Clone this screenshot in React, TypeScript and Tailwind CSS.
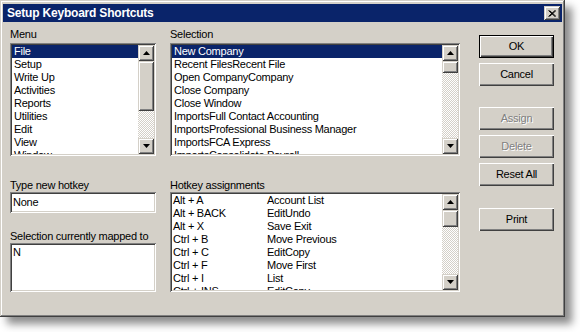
import React from "react";

const SUNKEN =
  "shadow-[inset_1px_1px_0_#808080,inset_-1px_-1px_0_#ffffff,inset_2px_2px_0_#404040,inset_-2px_-2px_0_#d4d0c8]";
const RAISED =
  "shadow-[inset_1px_1px_0_#ffffff,inset_-1px_-1px_0_#404040,inset_-2px_-2px_0_#808080]";
const SB_BTN =
  "shadow-[inset_1px_1px_0_#d4d0c8,inset_-1px_-1px_0_#404040,inset_2px_2px_0_#ffffff,inset_-2px_-2px_0_#808080]";

const menuItems = ["File", "Setup", "Write Up", "Activities", "Reports", "Utilities", "Edit", "View", "Window"];

const selectionItems = [
  "New Company",
  "Recent FilesRecent File",
  "Open CompanyCompany",
  "Close Company",
  "Close Window",
  "ImportsFull Contact Accounting",
  "ImportsProfessional Business Manager",
  "ImportsFCA Express",
  "ImportsConsolidate Payroll",
];

const hotkeys: [string, string][] = [
  ["Alt + A", "Account List"],
  ["Alt + BACK", "EditUndo"],
  ["Alt + X", "Save Exit"],
  ["Ctrl + B", "Move Previous"],
  ["Ctrl + C", "EditCopy"],
  ["Ctrl + F", "Move First"],
  ["Ctrl + I", "List"],
  ["Ctrl + INS", "EditCopy"],
];

function Arrow({ down }: { down?: boolean }) {
  return (
    <svg width="7" height="4" viewBox="0 0 7 4">
      <polygon points={down ? "0,0 7,0 3.5,4" : "3.5,0 7,4 0,4"} fill="#000" />
    </svg>
  );
}

function ScrollBar({ thumb }: { thumb: number }) {
  return (
    <div className="w-[16px] h-full flex flex-col shrink-0">
      <div className={`h-[16px] shrink-0 bg-[#d4d0c8] flex items-center justify-center ${SB_BTN}`}>
        <Arrow />
      </div>
      <div className="flex-1 bg-[image:repeating-conic-gradient(#ffffff_0_25%,#d4d0c8_0_50%)] bg-[length:2px_2px]">
        <div className={`bg-[#d4d0c8] ${SB_BTN}`} style={{ height: thumb }} />
      </div>
      <div className={`h-[16px] shrink-0 bg-[#d4d0c8] flex items-center justify-center ${SB_BTN}`}>
        <Arrow down />
      </div>
    </div>
  );
}

function ListBox({ items, thumb, height }: { items: string[]; thumb: number; height: number }) {
  return (
    <div className={`bg-white p-[2px] flex ${SUNKEN}`} style={{ height }}>
      <div className="flex-1 overflow-hidden">
        {items.map((it, i) => (
          <div
            key={it}
            className={`h-[13px] pl-[2px] whitespace-nowrap ${i === 0 ? "bg-[#0a246a] text-white" : ""}`}
          >
            {it}
          </div>
        ))}
      </div>
      <ScrollBar thumb={thumb} />
    </div>
  );
}

function Button({ label, disabled, isDefault }: { label: string; disabled?: boolean; isDefault?: boolean }) {
  const inner = (
    <div
      className={`h-full flex items-center justify-center bg-[#d4d0c8] ${RAISED} ${
        disabled ? "text-[#808080] [text-shadow:1px_1px_0_#ffffff]" : ""
      }`}
    >
      {label}
    </div>
  );
  if (isDefault) {
    return <div className="h-[23px] border border-black">{inner}</div>;
  }
  return <div className="h-[23px]">{inner}</div>;
}

export default function App() {
  return (
    <div className="w-[580px] h-[332px] bg-white overflow-hidden font-['Liberation_Sans',Arial,sans-serif] text-[11px] leading-[13px] tracking-[-0.25px] text-black">
      <div className="w-[565px] h-[317px] bg-[#d4d0c8] pt-[4px] px-[3px] shadow-[inset_-1px_-1px_0_#404040,inset_1px_1px_0_#d4d0c8,inset_-2px_-2px_0_#808080,inset_2px_2px_0_#ffffff,7px_7px_8px_rgba(0,0,0,0.45)]">
        {/* title bar */}
        <div className="h-[18px] bg-[#0a246a] flex items-center justify-between pl-[4px] pr-[2px]">
          <span className="text-white font-bold text-[12px] tracking-[-0.2px]">Setup Keyboard Shortcuts</span>
          <div className={`w-[16px] h-[14px] bg-[#d4d0c8] flex items-center justify-center ${SB_BTN}`}>
            <svg width="8" height="7" viewBox="0 0 8 7">
              <path d="M0.5 0.5 L7 6.5 M1.5 0.5 L8 6.5 M7 0.5 L0.5 6.5 M8 0.5 L1.5 6.5" stroke="#000" strokeWidth="1" />
            </svg>
          </div>
        </div>

        {/* body */}
        <div className="flex pl-[7px]">
          {/* left column */}
          <div className="w-[146px] pt-[6px] flex flex-col">
            <div className="h-[13px]">Menu</div>
            <div className="mt-[2px]">
              <ListBox items={menuItems} thumb={50} height={113} />
            </div>
            <div className="h-[13px] mt-[23px]">Type new hotkey</div>
            <div className={`h-[21px] bg-white flex items-center pl-[3px] ${SUNKEN}`}>None</div>
            <div className="h-[13px] mt-[17px]">Selection currently mapped to</div>
            <div className={`h-[49px] bg-white pl-[3px] pt-[3px] ${SUNKEN}`}>N</div>
          </div>

          {/* middle column */}
          <div className="w-[290px] ml-[14px] pt-[6px] flex flex-col">
            <div className="h-[13px]">Selection</div>
            <div className="mt-[2px]">
              <ListBox items={selectionItems} thumb={12} height={113} />
            </div>
            <div className="h-[13px] mt-[23px]">Hotkey assignments</div>
            <div className={`h-[100px] bg-white p-[2px] flex ${SUNKEN}`}>
              <div className="flex-1 overflow-hidden">
                {hotkeys.map(([k, v]) => (
                  <div key={k} className="h-[13px] flex pl-[1px] whitespace-nowrap">
                    <span className="w-[94px] shrink-0">{k}</span>
                    <span>{v}</span>
                  </div>
                ))}
              </div>
              <ScrollBar thumb={17} />
            </div>
          </div>

          {/* buttons */}
          <div className="w-[75px] ml-[19px] pt-[13px] flex flex-col">
            <Button label="OK" isDefault />
            <div className="mt-[5px]">
              <Button label="Cancel" />
            </div>
            <div className="mt-[21px]">
              <Button label="Assign" disabled />
            </div>
            <div className="mt-[5px]">
              <Button label="Delete" disabled />
            </div>
            <div className="mt-[5px]">
              <Button label="Reset All" />
            </div>
            <div className="mt-[22px]">
              <Button label="Print" />
            </div>
          </div>
        </div>
      </div>
    </div>
  );
}
